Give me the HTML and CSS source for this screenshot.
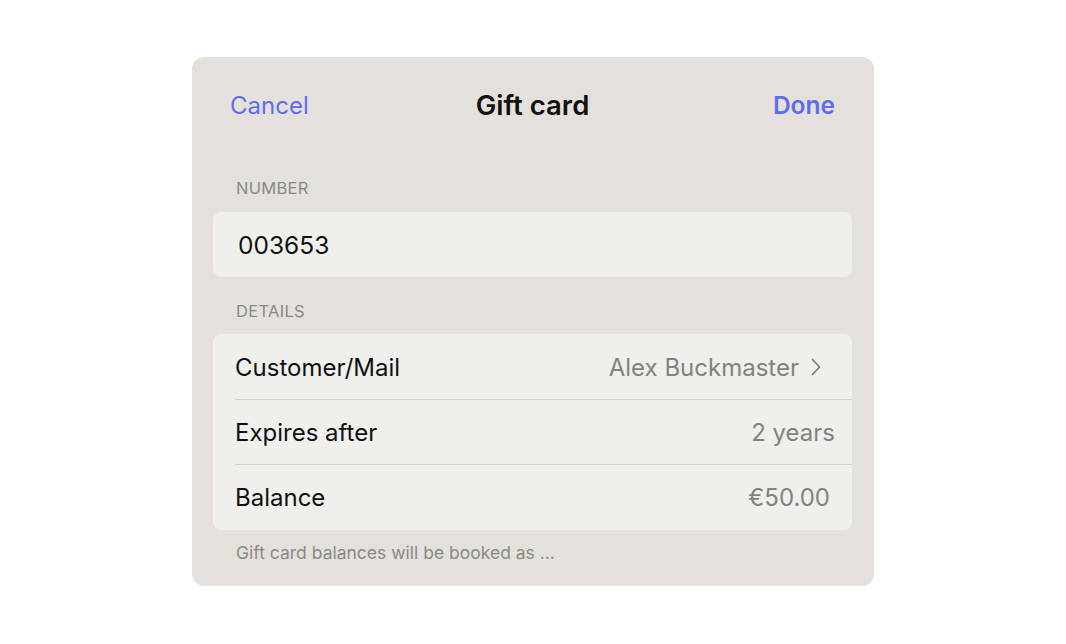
FILE: index.html
```html
<!DOCTYPE html>
<html>
<head>
<meta charset="utf-8">
<link rel="stylesheet" href="styles.css">
</head>
<body>
<div class="sheet">
  <div class="header">
    <span class="btn cancel">Cancel</span>
    <span class="title">Gift card</span>
    <span class="btn done">Done</span>
  </div>
  <div class="section-label label-number">NUMBER</div>
  <div class="group">
    <div class="field">003653</div>
  </div>
  <div class="section-label label-details">DETAILS</div>
  <div class="group">
    <div class="row first">
      <span class="key">Customer/Mail</span>
      <span class="value with-chevron">Alex Buckmaster
        <svg class="chevron" width="10" height="18" viewBox="0 0 10 18"><path d="M1.5 1.5 L8.5 9 L1.5 16.5" fill="none" stroke="#7d7d7b" stroke-width="1.7" stroke-linecap="round" stroke-linejoin="round"/></svg>
      </span>
    </div>
    <div class="row">
      <span class="key">Expires after</span>
      <span class="value">2 years</span>
    </div>
    <div class="row last">
      <span class="key">Balance</span>
      <span class="value money">€50.00</span>
    </div>
  </div>
  <div class="footnote">Gift card balances will be booked as ...</div>
</div>
</body>
</html>
```
FILE: styles.css
```css
html, body {
  margin: 0;
  padding: 0;
  background: #ffffff;
}
body {
  height: 100vh;
  box-sizing: border-box;
  padding-top: 57px;
  display: flex;
  align-items: flex-start;
  justify-content: center;
  font-family: Inter, "Noto Sans", "Liberation Sans", sans-serif;
}
.sheet {
  width: 682px;
  height: 529px;
  box-sizing: border-box;
  background: #e4e1dc;
  border-radius: 12px;
  display: flex;
  flex-direction: column;
}
.header {
  height: 96px;
  display: flex;
  align-items: center;
  justify-content: space-between;
  padding: 0 39px 0 38px;
}
.btn {
  font-size: 24px;
  color: #5f6cf2;
  width: 120px;
}
.cancel { text-align: left; }
.done { text-align: right; font-weight: 600; font-size: 24.5px; }
.title {
  font-size: 27.5px;
  font-weight: 600;
  color: #111111;
}
.section-label {
  font-size: 16.5px;
  line-height: 20px;
  color: #8a8987;
  padding-left: 44px;
  letter-spacing: 0.3px;
}
.label-number { margin-top: 25px; margin-bottom: 14px; }
.label-details { margin-top: 24px; margin-bottom: 13px; }
.group {
  margin: 0 22px 0 21px;
  background: #efefeb;
  border-radius: 8px;
  overflow: hidden;
}
.field {
  height: 65px;
  display: flex;
  align-items: center;
  padding-left: 25px;
  font-size: 24.5px;
  color: #111111;
}
.row {
  height: 65px;
  box-sizing: border-box;
  margin-left: 22px;
  padding-right: 17px;
  display: flex;
  align-items: center;
  justify-content: space-between;
  border-bottom: 1px solid #cfcfcb;
  font-size: 24px;
}
.row.first { height: 66px; padding-top: 1px; }
.row.last { border-bottom: none; height: 65px; }
.key { color: #111111; }
.value {
  color: #83827f;
  display: flex;
  align-items: center;
}
.with-chevron { margin-right: 14px; }
.chevron { margin-left: 12px; }
.money { margin-right: 5px; }
.footnote {
  margin-top: 13px;
  padding-left: 44px;
  font-size: 17.5px;
  line-height: 20px;
  color: #8a8987;
}
```
